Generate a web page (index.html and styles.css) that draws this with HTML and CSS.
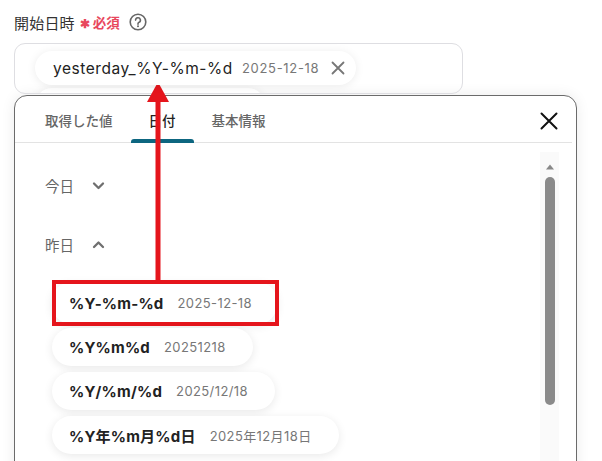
FILE: index.html
```html
<!DOCTYPE html>
<html lang="ja">
<head>
<meta charset="utf-8">
<link rel="stylesheet" href="styles.css">
</head>
<body>
<div class="page">
  <div class="label-row">
    <span class="label">開始日時</span>
    <span class="req"><span class="ast">✱</span>必須</span>
    <svg class="help" width="18" height="18" viewBox="0 0 18 18"><circle cx="9" cy="9" r="7.8" fill="none" stroke="#666" stroke-width="1.6"/><path d="M6.6 7.1a2.4 2.4 0 1 1 3.4 2.2c-.7.3-1 .8-1 1.5v.5" fill="none" stroke="#666" stroke-width="1.6" stroke-linecap="round"/><circle cx="9" cy="13.3" r="1" fill="#666"/></svg>
  </div>
  <div class="input">
    <div class="chip">
      <span class="chip-key">yesterday_%Y-%m-%d</span>
      <span class="chip-val">2025-12-18</span>
      <svg class="chip-x" width="14" height="14" viewBox="0 0 14 14"><path d="M1.5 1.5l11 11M12.5 1.5l-11 11" stroke="#777" stroke-width="1.8" stroke-linecap="round"/></svg>
    </div>
    <div class="chip ghost"></div>
  </div>
  <div class="popup">
    <div class="tabs">
      <div class="tab">取得した値</div>
      <div class="tab active">日付</div>
      <div class="tab">基本情報</div>
      <svg class="close" width="18" height="18" viewBox="0 0 18 18"><path d="M1.5 1.5l15 15M16.5 1.5l-15 15" stroke="#111" stroke-width="2" stroke-linecap="round"/></svg>
    </div>
    <div class="body">
      <div class="list">
        <div class="section">今日
          <svg width="13" height="9" viewBox="0 0 13 9"><path d="M2 2.5l4.5 4.5 4.5-4.5" fill="none" stroke="#6f6f6f" stroke-width="2.3" stroke-linecap="round" stroke-linejoin="round"/></svg>
        </div>
        <div class="section second">昨日
          <svg width="13" height="9" viewBox="0 0 13 9"><path d="M2 7l4.5-4.5 4.5 4.5" fill="none" stroke="#6f6f6f" stroke-width="2.3" stroke-linecap="round" stroke-linejoin="round"/></svg>
        </div>
        <div class="items">
          <div class="pill highlighted"><span class="k">%Y-%m-%d</span><span class="v">2025-12-18</span><span class="redbox"></span></div>
          <div class="pill"><span class="k">%Y%m%d</span><span class="v">20251218</span></div>
          <div class="pill"><span class="k">%Y/%m/%d</span><span class="v">2025/12/18</span></div>
          <div class="pill"><span class="k">%Y年%m月%d日</span><span class="v">2025年12月18日</span></div>
        </div>
      </div>
      <div class="scrollbar">
        <svg width="10" height="8" viewBox="0 0 10 8"><path d="M5 1.5L9 6.5H1z" fill="#888"/></svg>
        <div class="thumb"></div>
      </div>
    </div>
  </div>
  <svg class="arrow" width="30" height="200" viewBox="0 0 30 200"><path d="M15 0L26 20H4z" fill="#e5151c"/><rect x="12.5" y="18" width="5" height="181" fill="#e5151c"/></svg>
</div>
</body>
</html>
```

FILE: styles.css
```css
* { box-sizing: border-box; }
html, body { margin: 0; padding: 0; background: #fff; overflow: hidden; height: 461px; }
body { font-family: "Noto Sans CJK JP", "Noto Sans", sans-serif; color: #222; }
.page { position: relative; padding: 11px 14px 0 14px; width: 602px; }
.label-row { display: flex; align-items: center; height: 22px; }
.label { font-size: 15px; color: #333; letter-spacing: 0.2px; }
.req { color: #e8475d; font-size: 13.5px; margin-left: 5px; font-weight: 700; display: flex; align-items: center; }
.ast { font-size: 12px; margin-right: 3px; }
.help { margin-left: 9px; }
.input { margin-top: 10px; width: 449px; height: 51px; border: 1px solid #dedee2; border-radius: 11px; padding: 7px 0 0 20px; overflow: hidden; position: relative; }
.chip { display: inline-flex; align-items: center; height: 34px; padding: 0 11px 0 18px; background: #fff; border-radius: 17px; box-shadow: 0 1px 10px rgba(0,0,0,0.08); position: relative; z-index: 1; }
.chip.ghost { display: block; width: 230px; margin-top: 3px; box-shadow: 0 0 8px rgba(0,0,0,0.06); z-index: 0; }
.chip-key { font-family: Inter, "Noto Sans CJK JP", sans-serif; font-size: 15.5px; letter-spacing: 0.55px; color: #222; }
.chip-val { font-family: Inter, "Noto Sans CJK JP", sans-serif; font-size: 13px; letter-spacing: 0.7px; color: #777; margin-left: 9px; }
.chip-x { margin-left: 12px; }
.popup { margin-top: 1px; width: 563px; height: 420px; border: 1.5px solid #6b6b6b; border-radius: 13px; background: #fff; box-shadow: 0 0 14px rgba(0,0,0,0.08); overflow: hidden; }
.tabs { display: flex; align-items: stretch; height: 47px; padding-left: 12px; border-bottom: 1px solid #e3e3e3; margin-right: 4px; position: relative; }
.tab { display: flex; align-items: center; padding: 2px 18px 0 18px; font-size: 13.5px; color: #666; font-weight: 500; position: relative; }
.tab.active { color: #222; }
.tab.active::after { content: ""; position: absolute; left: 0; right: 0; bottom: -1px; height: 4px; background: #0d6680; border-radius: 3px 3px 0 0; }
.close { position: absolute; right: 14px; top: 16px; }
.body { display: flex; }
.list { flex: 1; padding: 32px 0 0 37px; }
.section { display: flex; align-items: center; gap: 18px; height: 20px; font-size: 14.5px; color: #666; margin-left: -7px; }
.section.second { margin-top: 39px; }
.items { display: flex; flex-direction: column; align-items: flex-start; gap: 6px; margin-top: 28px; }
.pill { position: relative; display: inline-flex; align-items: center; height: 38px; padding: 0 27px 0 17px; background: #fff; border-radius: 19px; box-shadow: 0 2px 10px rgba(0,0,0,0.09); }
.pill.highlighted { height: 42px; margin-bottom: -2px; padding-right: 25px; }
.k { font-family: Inter, "Noto Sans CJK JP", sans-serif; font-size: 15px; font-weight: 700; letter-spacing: 0.2px; color: #222; }
.v { font-family: Inter, "Noto Sans CJK JP", sans-serif; font-size: 13px; letter-spacing: 0.4px; color: #777; margin-left: 14px; }
.redbox { position: absolute; left: 0; right: -2px; top: -2px; bottom: -2px; border: 4px solid #e5151c; }
.scrollbar { width: 19px; margin-right: 17px; margin-top: 9px; height: 370px; background: #fafafa; display: flex; flex-direction: column; align-items: center; padding-top: 11px; }
.thumb { width: 10px; height: 228px; margin-top: 6px; background: #8a8a8a; border-radius: 5px; }
.arrow { position: absolute; left: 143px; top: 82px; }
```
